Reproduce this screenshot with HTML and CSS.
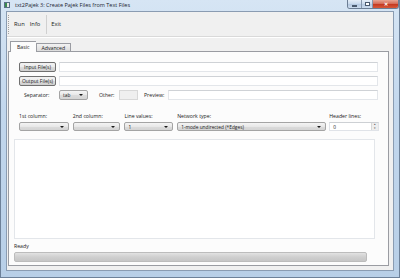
FILE: index.html
```html
<!DOCTYPE html>
<html lang="en">

<head>
    <meta charset="UTF-8">
    <title>txt2Pajek 3</title>
    <link rel="stylesheet" href="styles.css">
</head>

<body>
    <div class="window">
        <header class="titlebar">
            <span class="app-icon"></span>
            <span class="title">txt2Pajek 3: Create Pajek Files from Text Files</span>
            <div class="win-buttons">
                <span class="wb wb-min"><i></i></span>
                <span class="wb wb-max"><i></i></span>
                <span class="wb wb-close">&#x2715;</span>
            </div>
        </header>

        <div class="client">
            <nav class="menubar">
                <span class="grip"></span>
                <span class="menu-item">Run</span>
                <span class="menu-item">Info</span>
                <span class="menu-sep"></span>
                <span class="menu-item">Exit</span>
            </nav>

            <section class="tabs">
                <div class="tab-strip">
                    <span class="tab active">Basic</span>
                    <span class="tab">Advanced</span>
                </div>
                <div class="tab-pane">
                    <div class="file-row">
                        <button class="btn">Input File(s)</button>
                        <span class="field"></span>
                    </div>
                    <div class="file-row">
                        <button class="btn">Output File(s)</button>
                        <span class="field"></span>
                    </div>
                    <div class="sep-row">
                        <span class="sep-label">Separator:</span>
                        <span class="combo combo-tab">tab</span>
                        <span class="other-label">Other:</span>
                        <span class="field field-other"></span>
                        <span class="preview-label">Preview:</span>
                        <span class="field"></span>
                    </div>

                    <div class="options">
                        <div class="opt opt-1">
                            <span class="opt-label">1st column:</span>
                            <span class="combo"></span>
                        </div>
                        <div class="opt opt-2">
                            <span class="opt-label">2nd column:</span>
                            <span class="combo"></span>
                        </div>
                        <div class="opt opt-3">
                            <span class="opt-label">Line values:</span>
                            <span class="combo">1</span>
                        </div>
                        <div class="opt opt-4">
                            <span class="opt-label">Network type:</span>
                            <span class="combo">1-mode undirected (*Edges)</span>
                        </div>
                        <div class="opt opt-5">
                            <span class="opt-label">Header lines:</span>
                            <span class="spin">0<span class="spin-btns"><i>&#9652;</i><i>&#9662;</i></span></span>
                        </div>
                    </div>

                    <div class="log"></div>

                    <div class="status">Ready</div>
                    <div class="progress"></div>
                </div>
            </section>
        </div>
    </div>
</body>

</html>
```

FILE: styles.css
```css
* {
    box-sizing: border-box;
    font-family: "Open Sans", "Liberation Sans", sans-serif;
}

body {
    margin: 0;
    background-color: #ffffff;
}

.window {
    width: 400px;
    height: 278px;
    padding: 0 5px 6px 5px;
    background: linear-gradient(180deg, #d6e5f4 0%, #c2d7ed 40%, #b8cfe7 100%);
    border: 1px solid #6d8199;
    border-top: none;
    display: flex;
    flex-direction: column;
}

/* title bar */
.titlebar {
    height: 12px;
    display: flex;
    align-items: center;
    margin: 0 -2px;
}

.app-icon {
    width: 6px;
    height: 6px;
    margin-top: -1px;
    background: linear-gradient(90deg, #3b8a4f 0 50%, #e8e8e8 50%);
    border: 1px solid #5b6f86;
}

.title {
    font-size: 5.5px;
    color: #1b2430;
    margin-left: 5px;
    margin-top: -1px;
}

.win-buttons {
    margin-left: auto;
    margin-right: -3px;
    align-self: flex-start;
    display: flex;
    height: 9px;
    border: 1px solid #6c7e94;
    border-top: none;
    border-radius: 0 0 3px 3px;
    overflow: hidden;
}

.wb {
    display: flex;
    align-items: center;
    justify-content: center;
    height: 100%;
    background: linear-gradient(180deg, #e4edf7 0%, #c8d9ec 50%, #b4c8e0 51%, #ccdcee 100%);
}

.wb-min {
    width: 14px;
    border-right: 1px solid #8597ad;
}

.wb-min i {
    width: 5px;
    height: 2px;
    margin-top: 3px;
    background: #fff;
    border: 1px solid #4a5a6e;
}

.wb-max {
    width: 11px;
    border-right: 1px solid #8597ad;
}

.wb-max i {
    width: 5px;
    height: 4px;
    border: 1px solid #4a5a6e;
    box-shadow: inset 0 0 0 1px #fff;
}

.wb-close {
    width: 25px;
    font-size: 5px;
    font-weight: bold;
    color: #fff;
    background: linear-gradient(180deg, #e8a594 0%, #d46a55 48%, #c4381f 52%, #d7593b 100%);
}

/* client area */
.client {
    flex: 1;
    background-color: #f0f0f0;
    border: 1px solid #8a9cb2;
    display: flex;
    flex-direction: column;
    padding-bottom: 4px;
}

.menubar {
    height: 25px;
    display: flex;
    align-items: center;
    font-size: 5.8px;
    color: #1a1a1a;
    border-bottom: 1px solid #d9d9d9;
    box-shadow: 0 1px 0 #ffffff;
}

.grip {
    width: 1px;
    height: 19px;
    margin-left: 1px;
    margin-right: 5px;
    border-left: 1px dotted #a0a0a0;
}

.menu-item {
    padding: 0 2px 0 0;
    margin-right: 3px;
}

.menu-sep {
    width: 1px;
    height: 19px;
    background: #d0d0d0;
    margin: 0 4px 0 1px;
}

/* tabs */
.tabs {
    flex: 1;
    display: flex;
    flex-direction: column;
    padding: 3px 4px 0 1px;
}

.tab-strip {
    display: flex;
    align-items: flex-end;
    height: 11px;
    padding-left: 2px;
    font-size: 5.2px;
    color: #1a1a1a;
}

.tab {
    height: 8px;
    padding: 0 5px;
    display: flex;
    align-items: center;
    border: 1px solid #9a9ca2;
    border-bottom: none;
    background: linear-gradient(180deg, #f2f2f2, #dcdcdc);
}

.tab.active {
    height: 11px;
    padding: 0 6px;
    background: #fcfcfc;
    margin-bottom: -1px;
    position: relative;
    border-right: none;
}

.tab-pane {
    flex: 1;
    background-color: #fcfcfc;
    border: 1px solid #9a9ca2;
    padding: 10px 9px 3px 10px;
    display: flex;
    flex-direction: column;
    font-size: 5.2px;
    color: #1a1a1a;
}

.file-row {
    display: flex;
    gap: 3px;
    height: 10px;
    margin-bottom: 4px;
}

.btn {
    width: 37px;
    height: 10px;
    padding: 0;
    font-size: 5px;
    color: #1a1a1a;
    border: 1px solid #707070;
    border-radius: 2px;
    background: linear-gradient(180deg, #f2f2f2 0%, #ebebeb 50%, #dddddd 51%, #cfcfcf 100%);
}

.field {
    flex: 1;
    height: 10px;
    margin-right: 1px;
    background: #ffffff;
    border: 1px solid #e3e6ea;
    border-top-color: #cfd2d6;
}

.sep-row {
    display: flex;
    align-items: center;
    height: 10px;
}

.sep-label {
    width: 40px;
    padding-left: 5px;
}

.combo {
    position: relative;
    display: flex;
    align-items: center;
    height: 9px;
    padding-left: 3px;
    font-size: 4.8px;
    border: 1px solid #a4a4a4;
    border-radius: 2px;
    background: linear-gradient(180deg, #f4f4f4 0%, #e8e8e8 50%, #dcdcdc 51%, #d4d4d4 100%);
}

.combo::after {
    content: "";
    position: absolute;
    right: 4px;
    top: 3px;
    border-left: 2px solid transparent;
    border-right: 2px solid transparent;
    border-top: 2px solid #1a1a1a;
}

.combo-tab {
    width: 29px;
    height: 10px;
}

.other-label {
    margin-left: 11px;
    width: 20px;
}

.field-other {
    flex: none;
    width: 19px;
    margin-right: 0;
    background: #efefef;
    border-color: #d8d8d8;
}

.preview-label {
    margin-left: 6px;
    width: 24px;
}

.options {
    display: flex;
    margin-top: 13px;
    gap: 4px;
}

.opt {
    display: flex;
    flex-direction: column;
    gap: 2px;
}

.opt-label {
    height: 7px;
    line-height: 7px;
}

.opt-1 { width: 50px; }
.opt-2 { width: 48px; }
.opt-3 { width: 49px; }
.opt-4 { width: 150px; margin-right: -1px; }
.opt-5 { width: 50px; }

.spin {
    display: flex;
    align-items: center;
    height: 9px;
    padding-left: 3px;
    font-size: 4.8px;
    background: #ffffff;
    border: 1px solid #e0e3e8;
    border-top-color: #cdd0d4;
}

.spin-btns {
    margin-left: auto;
    width: 7px;
    height: 100%;
    display: flex;
    flex-direction: column;
    border-left: 1px solid #d8d8d8;
    background: #eeeeee;
}

.spin-btns i {
    flex: 1;
    font-style: normal;
    font-size: 3px;
    line-height: 3px;
    text-align: center;
    color: #555;
}

.log {
    height: 100px;
    margin: 8px 4px 0 -5px;
    background: #ffffff;
    border: 1px solid #e3e6ea;
}

.status {
    margin: 4px 0 0 -5px;
    height: 7px;
    line-height: 7px;
}

.progress {
    height: 10px;
    margin: 2px 12px 0 -5px;
    border: 1px solid #bcbcbc;
    border-radius: 2px;
    background: linear-gradient(180deg, #e2e2e2 0%, #cfcfcf 50%, #c6c6c6 100%);
}
```
